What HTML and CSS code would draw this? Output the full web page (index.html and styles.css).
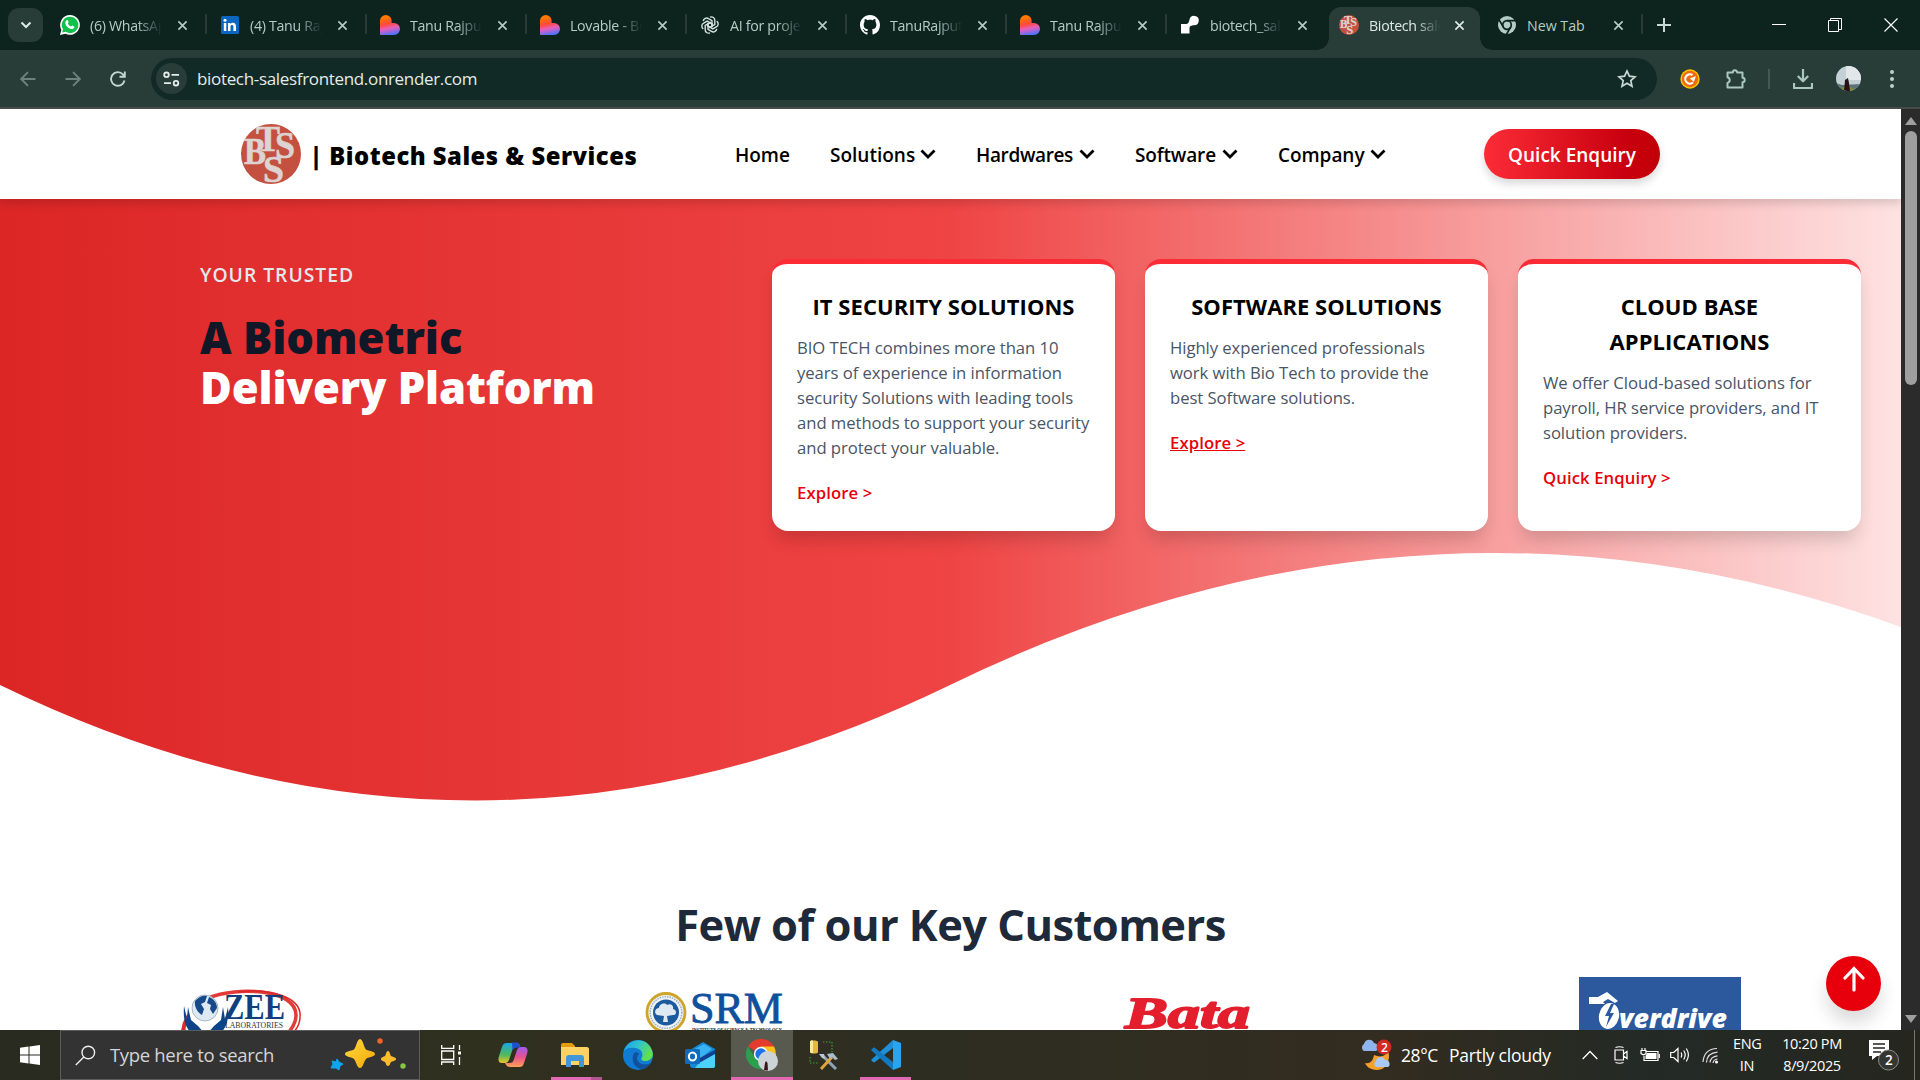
FILE: index.html
```html
<!DOCTYPE html>
<html lang="en">
<head>
<meta charset="utf-8">
<title>Biotech Sales &amp; Services</title>
<link rel="stylesheet" href="styles.css">
</head>
<body>
<svg class="defs" width="0" height="0">
  <defs>
    <linearGradient id="heart" x1="0.3" y1="0" x2="0.5" y2="1"><stop offset="0.1" stop-color="#ff7a00"/><stop offset="0.45" stop-color="#fe4a3c"/><stop offset="0.68" stop-color="#e65fc0"/><stop offset="1" stop-color="#4b73ff"/></linearGradient>
    <symbol id="x" viewBox="0 0 12 12"><path d="M1.500 1.500l9 9M10.500 1.500l-9 9" stroke="currentColor" stroke-width="1.800" fill="none"/></symbol>
    <symbol id="lovable" viewBox="0 0 20 20"><path d="M0 5.800A5.800 5.800 0 0 1 11.600 5.800V8H14a6 6 0 0 1 0 12H0z" fill="url(#heart)"/></symbol>
    <symbol id="chev" viewBox="0 0 16 10"><path d="M1.500 1.500L8 8l6.500-6.500" stroke="currentColor" stroke-width="2.800" fill="none"/></symbol>
    <symbol id="btss" viewBox="0 0 60 60"><circle cx="30" cy="30" r="30" fill="#c4513f"/><g fill="#ddd3d0" stroke="#ddd3d0" stroke-width=".6" font-family="Liberation Serif, serif" font-weight="700"><text x="15" y="27" font-size="36" textLength="24" lengthAdjust="spacingAndGlyphs">T</text><text x="34" y="34" font-size="37" textLength="20" lengthAdjust="spacingAndGlyphs">S</text><text x="3" y="40" font-size="37" textLength="22" lengthAdjust="spacingAndGlyphs">B</text><text x="22" y="58" font-size="37" textLength="21" lengthAdjust="spacingAndGlyphs">S</text></g></symbol>
  </defs>
</svg>

<div class="screen">
  <div class="tabstrip">
    <span class="tab-search"><svg width="12" height="8" viewBox="0 0 12 8"><path d="M1.500 1.500L6 6l4.500-4.500" stroke="#dfe9e5" stroke-width="2" fill="none"/></svg></span>
    <div class="tabs">
      <div class="tab"><svg class="fav" viewBox="0 0 20 20"><path d="M10 0a9.900 9.900 0 0 0-8.600 14.800L0 20l5.400-1.300A9.900 9.900 0 1 0 10 0z" fill="#fff"/><path d="M10 1.700a8.200 8.200 0 0 0-7 12.500l-.8 3.400 3.500-.8A8.200 8.200 0 1 0 10 1.700z" fill="#12c04c"/><path d="M6.600 5.300c.6-.5 1.200-.3 1.400.2l.6 1.500c.1.500-.8 1.200-.7 1.500.7 1.500 1.700 2.400 3.200 3 .4.100.9-1 1.400-.9l1.600.8c.6.300.5 1 0 1.700-1 1.200-2.600 1.200-4 .6C7.600 12.600 6 11 5.500 9c-.4-1.500 0-2.800 1.100-3.700z" fill="#fff"/></svg><span class="tab-label">(6) WhatsApp</span><svg class="close"><use href="#x"/></svg></div>
      <div class="tab"><svg class="fav" viewBox="0 0 20 20"><rect x="1" y="1" width="18" height="18" rx="1.500" fill="#0a66c2"/><path d="M3.800 8h2.500v8H3.800zM8 8h2.400v1.200c1.400-2.300 5.600-1.700 5.600 2V16h-2.600v-4.300c0-2.200-2.900-2-2.900 0V16H8z" fill="#fff"/><circle cx="5" cy="5.200" r="1.500" fill="#fff"/></svg><span class="tab-label">(4) Tanu Rajput</span><svg class="close"><use href="#x"/></svg></div>
      <div class="tab"><svg class="fav"><use href="#lovable"/></svg><span class="tab-label">Tanu Rajput</span><svg class="close"><use href="#x"/></svg></div>
      <div class="tab"><svg class="fav"><use href="#lovable"/></svg><span class="tab-label">Lovable - Build</span><svg class="close"><use href="#x"/></svg></div>
      <div class="tab"><svg class="fav" viewBox="0 0 20 20" fill="none" stroke="#d5e2de" stroke-width="1.400"><path id="k" d="M10 2.200c2.500-1 5 .8 4.800 3.300v4L10 12.300 7 10.500"/><use href="#k" transform="rotate(60 10 10)"/><use href="#k" transform="rotate(120 10 10)"/><use href="#k" transform="rotate(180 10 10)"/><use href="#k" transform="rotate(240 10 10)"/><use href="#k" transform="rotate(300 10 10)"/></svg><span class="tab-label">AI for project</span><svg class="close"><use href="#x"/></svg></div>
      <div class="tab"><svg class="fav" viewBox="0 0 16 16"><path fill="#fff" d="M8 0C3.580 0 0 3.580 0 8c0 3.540 2.290 6.530 5.470 7.590.4.070.55-.17.55-.38 0-.19-.01-.82-.01-1.490-2.010.37-2.530-.49-2.690-.94-.09-.23-.48-.94-.82-1.130-.28-.15-.68-.52-.01-.53.63-.01 1.080.58 1.230.82.72 1.210 1.870.87 2.330.66.070-.52.28-.87.51-1.070-1.780-.2-3.640-.89-3.640-3.950 0-.87.31-1.590.82-2.150-.08-.2-.36-1.020.08-2.120 0 0 .67-.21 2.200.82.640-.18 1.320-.27 2-.27s1.360.09 2 .27c1.530-1.040 2.200-.82 2.200-.82.44 1.100.16 1.920.08 2.120.51.56.82 1.270.82 2.150 0 3.070-1.870 3.750-3.650 3.950.29.25.54.73.54 1.480 0 1.070-.01 1.930-.01 2.200 0 .21.15.46.55.38A8.010 8.010 0 0 0 16 8c0-4.420-3.580-8-8-8z"/></svg><span class="tab-label">TanuRajput/b</span><svg class="close"><use href="#x"/></svg></div>
      <div class="tab"><svg class="fav"><use href="#lovable"/></svg><span class="tab-label">Tanu Rajput</span><svg class="close"><use href="#x"/></svg></div>
      <div class="tab last"><svg class="fav" viewBox="0 0 20 20"><path d="M1 9h4.500c3 0 3.500-2 4-4.500A4.700 4.700 0 1 1 14 10.300c-2.500.2-4.500.5-4.500 3.200V18.500H1z" fill="#fff"/></svg><span class="tab-label">biotech_sales</span><svg class="close"><use href="#x"/></svg></div>
      <div class="tab active"><svg class="fav"><use href="#btss"/></svg><span class="tab-label">Biotech sales</span><svg class="close"><use href="#x"/></svg></div>
      <div class="tab newtab"><svg class="fav" viewBox="0 0 20 20"><circle cx="10" cy="10" r="9" fill="#b3cdc6"/><circle cx="10" cy="10" r="4.300" fill="#b3cdc6" stroke="#0c231e" stroke-width="1.700"/><path d="M10 5.700h9M6.300 12L2 4.600M13.700 12l-4.400 7.600" stroke="#0c231e" stroke-width="1.700"/></svg><span class="tab-label full">New Tab</span><svg class="close"><use href="#x"/></svg></div>
      <svg class="plus" width="14" height="14" viewBox="0 0 14 14"><path d="M7 0v14M0 7h14" stroke="#c9dad5" stroke-width="2"/></svg>
    </div>
    <div class="winbtns">
      <svg width="14" height="14" viewBox="0 0 14 14"><path d="M0 6.500h14" stroke="#fff"/></svg>
      <svg width="14" height="14" viewBox="0 0 14 14" fill="none" stroke="#fff"><path d="M.5 2.500h10v11H.5zM2.500 2V.5h11v11H11"/></svg>
      <svg width="14" height="14" viewBox="0 0 14 14"><path d="M.5.5l13 13M13.500.5l-13 13" stroke="#fff" stroke-width="1.200"/></svg>
    </div>
  </div>

  <div class="toolbar">
    <div class="navbtns">
      <svg width="16" height="16" viewBox="0 0 16 16" class="dim"><path d="M15.500 8H1.500M8 1.200L1.200 8 8 14.800"/></svg>
      <svg width="16" height="16" viewBox="0 0 16 16" class="dim"><path d="M.5 8h14M8 1.200L14.800 8 8 14.800"/></svg>
      <svg width="16" height="16" viewBox="0 0 16 16"><path d="M14.500 9.500A6.800 6.800 0 1 1 13 3.500L14.500 5M14.800.5v5.200H9.500"/></svg>
    </div>
    <div class="omnibox">
      <span class="chip"><svg width="17" height="16" viewBox="0 0 17 16" fill="none" stroke="#e3ece9" stroke-width="1.800"><circle cx="3.500" cy="3.800" r="2.300"/><path d="M8.500 3.800H16M1 12.200h7"/><circle cx="13" cy="12.200" r="2.300"/></svg></span>
      <span class="url">biotech-salesfrontend.onrender.com</span>
      <svg class="star" width="20" height="20" viewBox="0 0 20 20"><path d="M10 2l2.400 5.200 5.600.6-4.200 3.800 1.200 5.600-5-2.900-5 2.900 1.200-5.600L2 7.800l5.600-.6z" fill="none" stroke="#c9d9d4" stroke-width="1.700"/></svg>
    </div>
    <div class="tools">
      <svg width="20" height="20" viewBox="0 0 20 20"><circle cx="10" cy="10" r="9.700" fill="#ffc400"/><circle cx="10" cy="10" r="8.200" fill="#ee6a0c"/><path d="M12.500 6A4.700 4.700 0 1 0 13 13.500" stroke="#fff" stroke-width="2.200" fill="none"/><path d="M10 9.500l6-2.500-2.200 6z" fill="#fff"/></svg>
      <svg width="22" height="22" viewBox="0 0 22 22"><path d="M2.500 4.500h5.300a2.200 2.200 0 1 1 4.400 0h5.300v5.300a2 2 0 1 1 0 4.400v5.300h-15v-4.500a3 3 0 0 0 0-5.800z" fill="none" stroke="#a9c8bf" stroke-width="2" stroke-linejoin="round"/></svg>
      <i class="vsep"></i>
      <svg width="20" height="20" viewBox="0 0 20 20"><path d="M10 0v12M4.800 7L10 12.200 15.200 7M1 14v5h18v-5" fill="none" stroke="#a9c8bf" stroke-width="2.200" stroke-linejoin="round"/></svg>
      <svg width="25" height="25" viewBox="0 0 25 25"><defs><clipPath id="av"><circle cx="12.500" cy="12.500" r="12.500"/></clipPath></defs><g clip-path="url(#av)"><path d="M0 0h25v25H0z" fill="#c3d0d6"/><path d="M10 0h15v14H10z" fill="#e2e8ea"/><path d="M0 17l6 2 19-1v7H0z" fill="#5b717a"/><path d="M3 22l10-2 8 5H3z" fill="#7f8a2e"/><path d="M9 14l3-2 1 5 1 8H8z" fill="#2a1016"/></g></svg>
      <svg width="4" height="18" viewBox="0 0 4 18" fill="#b9d2cb"><circle cx="2" cy="2" r="2"/><circle cx="2" cy="9" r="2"/><circle cx="2" cy="16" r="2"/></svg>
    </div>
  </div>

  <div class="viewport">
    <div class="page">
      <header class="site-header">
        <svg class="brand-logo"><use href="#btss"/></svg>
        <span class="brand">| Biotech Sales &amp; Services</span>
        <nav class="menu">
          <span class="item home"><b>Home</b></span>
          <span class="item solutions"><b>Solutions</b><svg class="chev"><use href="#chev"/></svg></span>
          <span class="item hardwares"><b>Hardwares</b><svg class="chev"><use href="#chev"/></svg></span>
          <span class="item software"><b>Software</b><svg class="chev"><use href="#chev"/></svg></span>
          <span class="item company"><b>Company</b><svg class="chev"><use href="#chev"/></svg></span>
        </nav>
        <span class="cta"><b>Quick Enquiry</b></span>
      </header>

      <section class="hero">
        <svg class="wave" width="1901" height="290" viewBox="0 0 1901 290"><path d="M0 142Q475 373 950 142T1901 84V290H0z" fill="#fff"/></svg>
        <div class="intro">
          <p class="eyebrow">YOUR TRUSTED</p>
          <h1><span class="dark">A Biometric</span><br><span class="light">Delivery Platform</span></h1>
        </div>
        <div class="cards">
          <article class="card">
            <h3>IT SECURITY SOLUTIONS</h3>
            <p>BIO TECH combines more than 10<br>years of experience in information<br>security Solutions with leading tools<br>and methods to support your security<br>and protect your valuable.</p>
            <a>Explore &gt;</a>
          </article>
          <article class="card">
            <h3>SOFTWARE SOLUTIONS</h3>
            <p>Highly experienced professionals<br>work with Bio Tech to provide the<br>best Software solutions.</p>
            <a class="hover">Explore &gt;</a>
          </article>
          <article class="card">
            <h3>CLOUD BASE<br>APPLICATIONS</h3>
            <p>We offer Cloud-based solutions for<br>payroll, HR service providers, and IT<br>solution providers.</p>
            <a>Quick Enquiry &gt;</a>
          </article>
        </div>
      </section>

      <section class="customers">
        <h2>Few of our Key Customers</h2>
        <div class="logos">
          <svg class="zee" width="126" height="60" viewBox="0 0 126 60">
            <path d="M30 17C60 5 118 8 118 34c0 12-9 20-17 26" fill="none" stroke="#e23b37" stroke-width="3.500"/><path d="M60 11c32-4 64 5 62 25 0 9-7 17-14 22" fill="none" stroke="#d8282b" stroke-width="1.500"/>
            <path d="M4 60c-1-10 1-19 6-26-5 10-4 18-1 26z" fill="#dc2b2d" stroke="#dc2b2d" stroke-width="2"/>
            <path d="M6 25l3 13 1-12 3 13 7 6 8 9 8-9 7-6 2-13 2 12 3-12c1 14-2 22-9 27l-5 8H20l-5-8C7 48 5 38 6 25z" fill="#0b4488"/>
            <circle cx="27" cy="27" r="13" fill="#dfe9f3" stroke="#9aa7b5" stroke-width=".8"/><path d="M17 20c4-5 9-6 12-5l-2 6-4 2 3 5-2 6c-4-2-8-8-7-14zM31 16c5 2 8 6 8 11l-4 6-3-5 1-4-4-2z" fill="#174a8b"/>
            <text x="46" y="38" font-family="Liberation Serif, serif" font-weight="700" font-size="35" textLength="61" lengthAdjust="spacingAndGlyphs" fill="#103f7c">ZEE</text>
            <text x="47" y="46.500" font-family="Liberation Serif, serif" font-size="8.500" textLength="58" lengthAdjust="spacingAndGlyphs" fill="#333">LABORATORIES</text>
          </svg>
          <svg class="srm" width="140" height="60" viewBox="0 0 140 60">
            <circle cx="21" cy="35.500" r="19" fill="#eef2f5" stroke="#cda52b" stroke-width="2.800"/><circle cx="21" cy="35.500" r="15.800" fill="none" stroke="#9db0c4" stroke-width="1.500" stroke-dasharray="1.500 1"/><circle cx="21" cy="35.500" r="13" fill="#1c5a9e"/><path d="M12 38c-4-3-1-7 2-7 0-4 6-6 8-3 4-2 7 1 6 4 4 1 4 6 0 6l-6 1 1 6h-5l1-6z" fill="#dfe9f2"/>
            <text x="45" y="46" font-family="Liberation Serif, serif" font-size="44" textLength="93" lengthAdjust="spacingAndGlyphs" fill="#0f509c" stroke="#0f509c" stroke-width=".8">SRM</text>
            <text x="47" y="54.500" font-family="Liberation Serif, serif" font-weight="700" font-size="7" textLength="90" lengthAdjust="spacingAndGlyphs" fill="#222">INSTITUTE OF SCIENCE &amp; TECHNOLOGY</text>
          </svg>
          <svg class="bata" width="140" height="60" viewBox="0 0 140 60"><text x="3" y="51" font-family="Liberation Serif, serif" font-weight="700" font-style="italic" font-size="44" textLength="125" lengthAdjust="spacingAndGlyphs" fill="#e31e2d" stroke="#e31e2d" stroke-width="1.800" stroke-linejoin="round">Bata</text></svg>
          <svg class="over" width="162" height="70" viewBox="0 0 162 70"><path d="M0 0h162v70H0z" fill="#2c599d"/><path d="M10 20h9l9-5 11 9-3 2-7-4-5 3 2 2H10z" fill="#fff"/><ellipse cx="30" cy="39" rx="10" ry="13" transform="rotate(12 30 39)" fill="#fff"/><path d="M32 27l-6 12h4l-3 11 8-14h-4l4-9z" fill="#2c599d"/><text x="40" y="51" font-family="Open Sans, sans-serif" font-weight="800" font-style="italic" font-size="27" textLength="108" lengthAdjust="spacingAndGlyphs" fill="#fff">verdrive</text></svg>
        </div>
      </section>
      <span class="totop"><svg width="22" height="26" viewBox="0 0 22 26"><path d="M11 24V3M2 12l9-9.500L20 12" fill="none" stroke="#fff" stroke-width="3.200" stroke-linecap="round"/></svg></span>
    </div>
    <div class="scrollbar">
      <svg width="12" height="8" viewBox="0 0 12 8"><path d="M6 0l6 8H0z" fill="#9f9f9f"/></svg>
      <i class="thumb"></i>
      <svg width="12" height="8" viewBox="0 0 12 8"><path d="M6 8L0 0h12z" fill="#9f9f9f"/></svg>
    </div>
  </div>

  <div class="taskbar">
    <span class="start"><svg width="20" height="20" viewBox="0 0 20 20" fill="#fff"><path d="M0 2.700L8.500 1.500v8H0zM9.500 1.400L20 0v9.500H9.500zM0 10.500h8.500v8L0 17.300zM9.500 10.500H20V20L9.500 18.600z"/></svg></span>
    <div class="search">
      <svg width="21" height="21" viewBox="0 0 21 21"><circle cx="13.300" cy="7.500" r="6.300" fill="none" stroke="#eee" stroke-width="1.400"/><path d="M8.800 12L.8 20" stroke="#eee" stroke-width="1.400"/></svg>
      <span class="hint">Type here to search</span>
      <svg class="sparkles" width="78" height="34" viewBox="0 0 78 34"><defs><linearGradient id="gold" x1="0" y1="0" x2="1" y2="1"><stop offset="0" stop-color="#ffd83a"/><stop offset="1" stop-color="#f4a90c"/></linearGradient></defs><path d="M30 1c3 0 4 9 6 10.500S45 13 45 16s-7 3-9 5-3 9-6 9-4-7-6-9-9-2-9-5 7-3 9-4.500S27 1 30 1z" fill="url(#gold)"/><path d="M58 13c2 0 2 4 3 5s5 1 5 3-4 2-5 3-1 4-3 4-2-3-3-4-4-1-4-3 3-2 4-3 1-5 3-5z" fill="#fbbc2c"/><path d="M7 21l2 3 4 2-3 2-1 4-3-2-5 0 2-4-1-3 4 1z" fill="#0ea5f0" stroke="#0ea5f0"/><circle cx="50" cy="3" r="2.700" fill="#f2642a"/><circle cx="73" cy="28" r="2.700" fill="#86c93c"/></svg>
    </div>
    <div class="apps">
      <span class="app"><svg width="20" height="20" viewBox="0 0 20 20" fill="none" stroke="#fff" stroke-width="1.300"><path d="M.7 0v3.300h12V0M.7 6h12v8.500H.7zM.7 20v-3h12v3M18.500 0v5M18.500 12v8"/><path d="M17 6.500h3v3h-3z" fill="#fff" stroke="none"/></svg></span>
      <span class="app"><svg width="30" height="28" viewBox="0 0 30 28"><defs><linearGradient id="c1" x1="0" y1="0" x2="0" y2="1"><stop offset="0" stop-color="#18a5e8"/><stop offset=".6" stop-color="#52b95a"/><stop offset="1" stop-color="#f2c22a"/></linearGradient><linearGradient id="c2" x1="0" y1="0" x2="0" y2="1"><stop offset="0" stop-color="#9a5cf2"/><stop offset=".5" stop-color="#e8508e"/><stop offset="1" stop-color="#ffa253"/></linearGradient></defs><path d="M9 2h9c3 0 4 2 4 4l-3 0c-3 0-4 1-5 4l-3 9c-1 2-2 3-4 3H4c-4 0-4-4-3-7l3-9c1-3 2-4 5-4z" fill="url(#c1)"/><path d="M14 1.500h5c2 0 3 2 3.500 5h-3c-3 0-4 1-5 3z" fill="#1f4fd0"/><path d="M21 26h-9c-3 0-4-2-5-4h4c3 0 4-1 5-4l3-9c1-2 2-3 4-3h3c4 0 4 4 3 7l-3 9c-1 3-2 4-5 4z" fill="url(#c2)"/></svg></span>
      <span class="app"><svg width="28" height="24" viewBox="0 0 28 24"><path d="M0 2c0-1 .5-2 2-2h9l3 3v5H0z" fill="#e39c0c"/><path d="M0 4h26c1 0 2 1 2 2v16H0z" fill="#fdd264"/><path d="M5 24v-9c0-2 1-3 3-3h12c2 0 3 1 3 3v9h-5v-6h-8v6z" fill="#3f97d9"/></svg></span>
      <span class="app"><svg width="30" height="30" viewBox="0 0 30 30"><defs><linearGradient id="e1" x1="0" y1="0" x2="1" y2=".4"><stop offset="0" stop-color="#1a9be8"/><stop offset=".5" stop-color="#2fc3d0"/><stop offset="1" stop-color="#63e04d"/></linearGradient></defs><circle cx="15" cy="15" r="15" fill="#0f7bd3"/><path d="M1 11C4-2 25-5 29.500 12c1.500 6-3 9-7 9-3 0-5-1-4-3 2-3 1-9-6-10C8 7 3 8 1 11z" fill="url(#e1)"/><path d="M11 13c-3 6-1 14 7 16 4 0 8-3 10-6-6 3-14 1-14-5 0-2 1-3 2-4-1-2-4-2-5-1z" fill="#12509b"/></svg></span>
      <span class="app"><svg width="30" height="26" viewBox="0 0 30 26"><path d="M5 8L18 0l12 7v17c0 1-1 2-2 2H8c-2 0-3-1-3-3z" fill="#1489d8"/><path d="M8 8l11-6 8 5-14 11z" fill="#39b3f0"/><path d="M13 17L30 8v5L15 22z" fill="#10408e"/><path d="M14 21l16-9v12c0 1-1 2-2 2H10z" fill="#4bd2f8"/><rect x="0" y="7" width="15" height="15" rx="1.500" fill="#0f6cbd"/><ellipse cx="7.500" cy="14.500" rx="3.600" ry="4" fill="none" stroke="#fff" stroke-width="2"/></svg></span>
      <span class="app on"><svg width="32" height="32" viewBox="0 0 32 32"><path d="M15 15L2 7.500A15 15 0 0 1 28 7.500z" fill="#e33b2e"/><path d="M15 15h14.800A15 15 0 0 0 28 7.500H15z" fill="#fbc116"/><path d="M15 15h15a15 15 0 0 1-14 15z" fill="#fbc116"/><path d="M2 7.500L9 19l7 2v9A15 15 0 0 1 2 7.500z" fill="#2b9f4b"/><circle cx="15" cy="15" r="7.200" fill="#fff"/><circle cx="15" cy="15" r="5.700" fill="#1a73e8"/><circle cx="22" cy="22" r="10" fill="#cdd4d7"/><path d="M18 31l1-7 1-2 1.500 2 .5 7.500z" fill="#3b1417"/></svg></span>
      <span class="app"><svg width="30" height="30" viewBox="0 0 30 30"><path d="M1 2c0-2 8-2 8 0v10c0 2-8 2-8 0z" fill="#e6b93b"/><path d="M1 2c0-2 3-2 3-1v12c-1 0-3 0-3-1z" fill="#fbe9a2"/><path d="M14 2h9v10M1 17v6h9" fill="none" stroke="#3f9b3c" stroke-width="1.200" stroke-dasharray="1.500 1.500"/><path d="M27 29L13 15" stroke="#8fa4b5" stroke-width="3"/><path d="M10 14l5 0 1 5-3-1z" fill="#b8c7d2"/><path d="M12 29l11-12" stroke="#e0a53c" stroke-width="3"/><path d="M18 14l6-1 5 6-3 1-3-3-2 2z" fill="#a9bccb"/></svg></span>
      <span class="app"><svg width="30" height="30" viewBox="0 0 30 30"><path d="M22 0l8 3v24l-8 3z" fill="#2ba4ef"/><path d="M22 0v8L4 22c-1 1-2 0-3-1-1-1-1-1 0-2z" fill="#1f8fd8"/><path d="M22 30v-8L4 8C3 7 2 8 1 9c-1 1-1 1 0 2z" fill="#1279bf"/></svg></span>
    </div>
    <div class="underlines"><i class="u1"></i><i class="u2"></i><i class="u3"></i><i class="u4"></i></div>
    <div class="tray">
      <svg width="32" height="32" viewBox="0 0 32 32"><path d="M13 16c7 3 12 1 14-5 3 9-1 20-11 20-7 0-11-4-12-7 5 1 8-2 9-8z" fill="#f6a02c"/><path d="M3 12a4 4 0 0 1 0-7c1-5 8-6 10-1 4 0 5 6 2 8z" fill="#8fb5ee"/><path d="M15 28a3.500 3.500 0 0 1 0-6c1-5 8-5 9-1 5-1 6 6 3 7z" fill="#a9c9f6"/><circle cx="23" cy="8" r="7.500" fill="#d12a22"/><text x="20" y="12.500" font-family="Open Sans, sans-serif" font-size="12" font-weight="600" fill="#fff">2</text></svg>
      <span class="temp">28°C</span><span class="cond">Partly cloudy</span>
      <svg class="t-car" width="16" height="10" viewBox="0 0 16 10"><path d="M.7 9L8 1.500 15.300 9" fill="none" stroke="#fff" stroke-width="1.300"/></svg>
      <svg class="t-cam" width="16" height="18" viewBox="0 0 16 18" fill="none" stroke="#fff" stroke-width="1.200"><path d="M2 4h8.500v10H2zM10.500 8L14 5.500v7L10.500 10M2.500 1.500Q6.500 0 10.500 1.500M2.500 16.500Q6.500 18 10.500 16.500"/></svg>
      <svg class="t-bat" width="20" height="14" viewBox="0 0 20 14" fill="none" stroke="#fff" stroke-width="1.200"><path d="M6 3.500h12v9H4V8"/><path d="M7 5h9.500v6H5.500V8z" fill="#fff" stroke="none"/><path d="M19.300 6v4M1 2.500h5v3Q3.500 8 1 5.500zM2 0v2.500M5 0v2.500"/></svg>
      <svg class="t-vol" width="20" height="18" viewBox="0 0 20 18" fill="none" stroke="#fff" stroke-width="1.200"><path d="M.7 6.500h3L8 2.500v13l-4.300-4H.7zM11 6.500q1.500 2.500 0 5M13.700 4.500q3 4.500 0 9M16.300 2.500q4.200 6.500 0 13"/></svg>
      <svg class="t-net" width="17" height="17" viewBox="0 0 17 17" fill="none" stroke="#ddd" stroke-width="1.200"><path d="M1 15Q2 2 15 1.500M4.500 15.500Q5 6 15.500 5.200M8 15.500Q8.500 9.500 15.500 8.800M11 16Q11.500 12.500 15.500 12"/><circle cx="14.500" cy="15" r="1.500" fill="#fff" stroke="none"/></svg>
      <span class="lang">ENG<br>IN</span>
      <span class="clock">10:20 PM<br>8/9/2025</span>
      <svg class="t-note" width="32" height="32" viewBox="0 0 32 32"><path d="M1 1h20v16H9l-5 4v-4H1z" fill="#fff"/><path d="M5 5h12M5 9h12M5 13h8" stroke="#22241e" stroke-width="1.300"/><circle cx="20.500" cy="21" r="10" fill="#343631" stroke="#8b8c88"/><text x="17" y="26" font-family="Open Sans, sans-serif" font-size="13.500" font-weight="600" fill="#fff">2</text></svg>
      <i class="peek"></i>
    </div>
  </div>
</div>
</body>
</html>
```
FILE: styles.css
```css
*{box-sizing:border-box}
body{margin:0;font-family:"Open Sans","Noto Sans",sans-serif;background:#fff;overflow:hidden}
p,h1,h2,h3{margin:0}
i{display:block}
svg{flex:none;display:block}
.defs{position:absolute}
.screen{width:1920px;height:1080px;display:flex;flex-direction:column;overflow:hidden}

/* browser tabs */
.tabstrip{height:50px;flex:none;background:#0c231e;display:flex;align-items:center;padding-left:8px}
.tab-search{width:35px;height:34px;border-radius:11px;background:#283d38;display:grid;place-items:center}
.tabs{display:flex;align-items:center;height:50px;margin-left:7px}
.tab{width:160px;height:50px;display:flex;align-items:center;padding-left:10px;color:#b3cdc6;position:relative}
.tab::after{content:"";position:absolute;right:3px;top:14px;width:2px;height:20px;background:#283d38;border-radius:1px}
.tab.last::after,.tab.active::after{display:none}
.fav{width:20px;height:20px}
.tab-label{font-size:14.200px;margin-left:10px;width:72px;overflow:hidden;white-space:nowrap;letter-spacing:-.3px;-webkit-mask-image:linear-gradient(90deg,#000 65%,transparent 100%);mask-image:linear-gradient(90deg,#000 65%,transparent 100%)}
.tab-label.full{width:73px;letter-spacing:0;-webkit-mask-image:none;mask-image:none}
.close{width:11px;height:11px;margin-left:15px}
.tab.last{width:159px}
.tab.active{width:151px;height:43px;margin-top:7px;padding-bottom:7px;background:#283d38;border-radius:12px 12px 0 0;color:#dfe9e5}
.tab.active .tab-label{width:71px}
.tab.active .close{margin-left:14px}
.tab.active::before{content:"";position:absolute;left:-12px;right:-12px;bottom:0;height:12px;background:radial-gradient(circle at 0 0,transparent 11.500px,#283d38 12px) left/12px 12px no-repeat,radial-gradient(circle at 100% 0,transparent 11.500px,#283d38 12px) right/12px 12px no-repeat}
.tab.newtab{width:166px;padding-left:17px}
.tab.newtab .close{margin-left:13px}
.plus{margin-left:11px}
.winbtns{display:flex;gap:42px;margin-left:auto;margin-right:22px}

/* address bar */
.toolbar{height:59px;flex:none;background:#283d38;border-bottom:2px solid #474c49;display:flex;align-items:center}
.navbtns{display:flex;gap:29px;padding-left:20px;width:151px}
.navbtns svg{fill:none;stroke:#c5d6d1;stroke-width:1.900}
.navbtns .dim{stroke:#6d827c}
.omnibox{width:1506px;height:42px;border-radius:21px;background:#122a25;display:flex;align-items:center;padding:0 20px 0 5px}
.chip{width:31px;height:31px;border-radius:50%;background:#283d38;display:grid;place-items:center}
.url{font-size:17px;letter-spacing:-.33px;color:#e3ece9;margin-left:10px}
.star{margin-left:auto}
.tools{display:flex;align-items:center;margin-left:23px}
.tools svg:nth-of-type(2){margin-left:25px}
.vsep{width:2px;height:20px;background:#435a54;margin:0 23px 0 21px}
.tools svg:nth-of-type(4){margin-left:23px}
.tools svg:nth-of-type(5){margin-left:29px}

/* site header */
.viewport{height:921px;flex:none;display:flex}
.page{width:1901px;height:921px;overflow:hidden;position:relative;background:#fff}
.site-header{height:90px;background:#fff;display:flex;align-items:center;padding-left:241px;position:relative;z-index:2;box-shadow:0 5px 8px rgba(0,0,0,.13)}
.brand-logo{width:60px;height:60px}
.brand{font-size:23.800px;font-weight:800;letter-spacing:.5px;width:328px;margin-left:9px;padding-top:4px;white-space:nowrap}
.menu{display:flex;gap:40px;margin-left:97px;font-size:19px;color:#000}
.menu b,.cta b{font-weight:600}
.menu b{padding-top:2px;white-space:nowrap}
.item{display:flex;align-items:center;justify-content:space-between}
.home{width:55px}
.solutions{width:106px}
.hardwares{width:119px;letter-spacing:-.36px}
.software{width:103px;letter-spacing:-.14px}
.company{width:108px;letter-spacing:-.05px}
.chev{width:16px;height:10px}
.cta{width:176px;height:50px;border-radius:25px;margin-left:98px;background:linear-gradient(90deg,#fb2c36,#c9000f 80%,#c10007);color:#fff;font-size:19px;padding-top:2px;display:grid;place-items:center;box-shadow:0 5px 8px rgba(0,0,0,.15)}

/* hero */
.hero{height:634px;position:relative;background:linear-gradient(90deg,#dc2626,#ef4444 50%,#fee2e2);display:flex;padding:60px 0 0 200px}
.wave{position:absolute;left:0;bottom:0}
.intro{width:572px;position:relative}
.eyebrow{color:#e5e7eb;font-size:19.300px;letter-spacing:1px;font-weight:600;line-height:32px}
h1{font-size:43.500px;font-weight:800;line-height:50px;color:#fff;margin-top:22px}
.dark{color:#101828}
.light{letter-spacing:-.12px}
.cards{display:flex;gap:30px;height:272px;position:relative}
.card{width:343px;border-radius:16px;border-top:5px solid #fb2c36;background:#fff;padding:25px 0 0 25px;box-shadow:0 12px 18px -4px rgba(0,0,0,.16)}
.card h3{font-size:22px;font-weight:700;line-height:35px;text-align:center;letter-spacing:.05px;margin:0 25px 11px 0}
.card p{font-size:16.700px;line-height:25px;letter-spacing:-.06px;color:#4a5565;white-space:nowrap;margin-bottom:20px}
.card a{font-size:16.700px;line-height:25px;letter-spacing:.1px;font-weight:600;color:#e7000b}
.hover{text-decoration:underline}

/* customers */
.customers{padding-top:67px}
h2{font-size:43.500px;font-weight:700;line-height:50px;letter-spacing:-.56px;text-align:center;color:#1e2939}
.logos{display:flex;align-items:flex-start;margin-top:27px}
.zee{margin:4px 0 0 178px}
.srm{margin-left:341px}
.bata{margin-left:337px}
.over{margin-left:317px}
.totop{position:absolute;right:20px;bottom:19px;width:55px;height:55px;border-radius:50%;background:#e7000b;display:grid;place-items:center;padding-bottom:9px;box-shadow:0 12px 18px rgba(0,0,0,.14)}
.scrollbar{width:19px;background:#2b2b2b;display:flex;flex-direction:column;align-items:center;padding:8px 0 7px}
.scrollbar .thumb{width:12px;height:254px;border-radius:6px;background:#9f9f9f;margin:6px 0 auto}

/* taskbar */
.taskbar{height:50px;flex:none;background:linear-gradient(90deg,#292b20,#30301f 25%,#2e2d22 50%,#332c20 72%,#232a25 86%,#26261f);display:flex;position:relative;color:#fff}
.start{width:60px;display:grid;place-items:center}
.search{width:360px;border:1px solid #5c5c5c;background:#333;display:flex;align-items:center;padding-left:14px;font-size:18.500px;color:#d5d5d5}
.hint{margin-left:14px;padding-bottom:2px;width:164px;white-space:nowrap;letter-spacing:-.33px}
.sparkles{margin-left:56px}
.apps{display:flex;margin-left:0}
.app{width:62.200px;display:grid;place-items:center}
.app.on{background:#585a50}
.underlines{position:absolute;left:551px;bottom:0;display:flex}
.underlines i{height:3px;background:#e368b4}
.u1{width:40px}
.underlines .u2{width:11px;background:#b0558d}
.u3{width:62px;margin-left:129px}
.u4{width:51px;margin-left:67px}
.tray{display:flex;align-items:center;margin-left:auto;padding-right:5px;font-size:17.500px}
.temp{width:37px;margin-left:8px;letter-spacing:-.4px}
.cond{width:102px;margin:0 31px 0 11px;white-space:nowrap;letter-spacing:-.25px}
.t-cam{margin-left:15px}
.t-bat{margin-left:11px}
.t-vol{margin-left:10px}
.t-net{margin-left:12px}
.lang,.clock{font-size:14.500px;line-height:22px;text-align:center;white-space:nowrap}
.lang{width:28px;margin-left:14px;letter-spacing:-.3px}
.clock{width:60px;margin-left:21px;letter-spacing:-.35px}
.t-note{margin-left:26px}
.peek{width:1px;height:50px;background:#777;margin-left:14px}
```
